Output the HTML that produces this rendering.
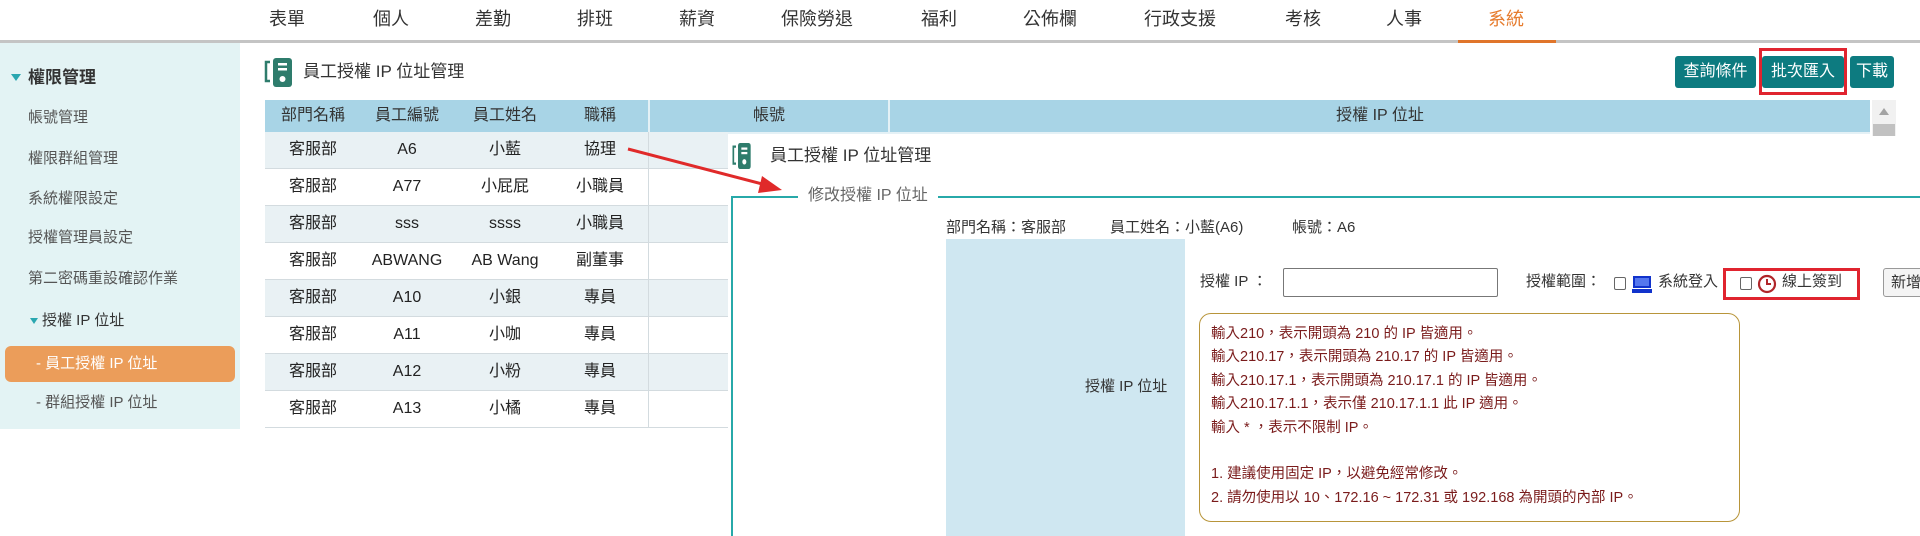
<!DOCTYPE html>
<html><head><meta charset="utf-8">
<style>
*{margin:0;padding:0;box-sizing:border-box}
body{width:1920px;height:536px;overflow:hidden;background:#fff;font-family:"Liberation Sans","Noto Sans CJK TC",sans-serif;color:#333;position:relative;line-height:1.3}
.a{position:absolute;white-space:nowrap}
.nav{font-size:18px;top:8px;color:#333}
.sb{font-size:15px;color:#555;left:28px}
.row{position:absolute;left:265px;width:463px;height:37px;border-bottom:1px solid #d3dbdf;font-size:16px;color:#222}
.row.s{background:#e9f1f4}
.row span{position:absolute;top:0;height:36px;line-height:36px;text-align:center;white-space:nowrap}
.c1{left:8px;width:80px}.c2{left:102px;width:80px}.c3{left:200px;width:80px}.c4{left:295px;width:80px}
.row i{position:absolute;left:383px;top:0;bottom:0;border-left:1px solid #d3dbdf}
.btn{position:absolute;top:56px;height:32px;background:#0d7b80;color:#fff;font-size:16px;border-radius:3px;text-align:center;line-height:32px}
.help{font-size:14.5px;color:#7a1b1b;left:1211px}
.hd{position:absolute;top:100px;height:32px;line-height:32px;font-size:16px;color:#333;text-align:center;white-space:nowrap}
</style></head><body>
<div class="a nav" style="left:269px">表單</div>
<div class="a nav" style="left:373px">個人</div>
<div class="a nav" style="left:475px">差勤</div>
<div class="a nav" style="left:577px">排班</div>
<div class="a nav" style="left:679px">薪資</div>
<div class="a nav" style="left:781px">保險勞退</div>
<div class="a nav" style="left:921px">福利</div>
<div class="a nav" style="left:1023px">公佈欄</div>
<div class="a nav" style="left:1144px">行政支援</div>
<div class="a nav" style="left:1285px">考核</div>
<div class="a nav" style="left:1386px">人事</div>
<div class="a nav" style="left:1488px;color:#e67c2e">系統</div>
<div class="a" style="left:0;top:40px;width:1920px;height:3px;background:#c4c4c4"></div>
<div class="a" style="left:1458px;top:40px;width:98px;height:3px;background:#e0752a"></div>

<div class="a" style="left:0;top:43px;width:240px;height:386px;background:#e3f3f4"></div>
<div class="a" style="left:11px;top:74px;width:0;height:0;border-left:5px solid transparent;border-right:5px solid transparent;border-top:7px solid #2aa7b0"></div>
<div class="a" style="left:28px;top:67px;font-size:17px;font-weight:bold;color:#333">權限管理</div>
<div class="a sb" style="top:108px">帳號管理</div>
<div class="a sb" style="top:149px">權限群組管理</div>
<div class="a sb" style="top:189px">系統權限設定</div>
<div class="a sb" style="top:228px">授權管理員設定</div>
<div class="a sb" style="top:269px">第二密碼重設確認作業</div>
<div class="a" style="left:30px;top:318px;width:0;height:0;border-left:4px solid transparent;border-right:4px solid transparent;border-top:6px solid #2aa7b0"></div>
<div class="a" style="left:42px;top:311px;font-size:15px;color:#333">授權 IP 位址</div>
<div class="a" style="left:5px;top:346px;width:230px;height:36px;background:#eb9d5a;border-radius:6px"></div>
<div class="a" style="left:36px;top:354px;font-size:15px;color:#fff">- 員工授權 IP 位址</div>
<div class="a sb" style="left:36px;top:393px">- 群組授權 IP 位址</div>

<svg class="a" style="left:264px;top:58px" width="30" height="29" viewBox="0 0 30 29"><path d="M6 4H2V23H6" fill="none" stroke="#2e7c6c" stroke-width="2.5"/><rect x="9" y="0" width="19" height="29" rx="3" fill="#2e7c6c"/><rect x="14" y="5" width="9" height="2.5" fill="#fff"/><rect x="14" y="10" width="9" height="2.5" fill="#fff"/><circle cx="18.5" cy="21" r="3" fill="#fff"/></svg>
<div class="a" style="left:303px;top:61px;font-size:17px;color:#333">員工授權 IP 位址管理</div>

<div class="btn" style="left:1675px;width:81px">查詢條件</div>
<div class="btn" style="left:1762px;width:82px">批次匯入</div>
<div class="btn" style="left:1850px;width:44px">下載</div>
<div class="a" style="left:1759px;top:48px;width:88px;height:47px;border:3px solid #e0242f"></div>

<div class="a" style="left:265px;top:100px;width:1605px;height:32px;background:#a8d4e6"></div>
<div class="a" style="left:265px;top:132px;width:1605px;height:2px;background:#e4f1f6"></div>
<div class="a" style="left:648px;top:100px;height:32px;border-left:2px solid #e4f1f6"></div>
<div class="a" style="left:888px;top:100px;height:32px;border-left:2px solid #e4f1f6"></div>
<div class="hd" style="left:273px;width:80px">部門名稱</div>
<div class="hd" style="left:367px;width:80px">員工編號</div>
<div class="hd" style="left:465px;width:80px">員工姓名</div>
<div class="hd" style="left:560px;width:80px">職稱</div>
<div class="hd" style="left:650px;width:238px">帳號</div>
<div class="hd" style="left:890px;width:980px">授權 IP 位址</div>
<div class="a" style="left:1872px;top:100px;width:24px;height:36px;background:#f1f1f1"></div>
<div class="a" style="left:1879px;top:108px;width:0;height:0;border-left:5px solid transparent;border-right:5px solid transparent;border-bottom:7px solid #a3a3a3"></div>
<div class="a" style="left:1873px;top:124px;width:22px;height:12px;background:#c1c1c1"></div>

<div class="row s" style="top:132px"><span class="c1">客服部</span><span class="c2">A6</span><span class="c3">小藍</span><span class="c4">協理</span><i></i></div>
<div class="row" style="top:169px"><span class="c1">客服部</span><span class="c2">A77</span><span class="c3">小屁屁</span><span class="c4">小職員</span><i></i></div>
<div class="row s" style="top:206px"><span class="c1">客服部</span><span class="c2">sss</span><span class="c3">ssss</span><span class="c4">小職員</span><i></i></div>
<div class="row" style="top:243px"><span class="c1">客服部</span><span class="c2">ABWANG</span><span class="c3">AB Wang</span><span class="c4">副董事</span><i></i></div>
<div class="row s" style="top:280px"><span class="c1">客服部</span><span class="c2">A10</span><span class="c3">小銀</span><span class="c4">專員</span><i></i></div>
<div class="row" style="top:317px"><span class="c1">客服部</span><span class="c2">A11</span><span class="c3">小咖</span><span class="c4">專員</span><i></i></div>
<div class="row s" style="top:354px"><span class="c1">客服部</span><span class="c2">A12</span><span class="c3">小粉</span><span class="c4">專員</span><i></i></div>
<div class="row" style="top:391px"><span class="c1">客服部</span><span class="c2">A13</span><span class="c3">小橘</span><span class="c4">專員</span><i></i></div>

<div class="a" style="left:728px;top:134px;width:1142px;height:402px;background:#fff"></div>
<svg class="a" style="left:732px;top:143px" width="20" height="26" viewBox="0 0 30 29" preserveAspectRatio="none"><path d="M6 4H2V23H6" fill="none" stroke="#2e7c6c" stroke-width="2.5"/><rect x="9" y="0" width="19" height="29" rx="3" fill="#2e7c6c"/><rect x="14" y="5" width="9" height="2.5" fill="#fff"/><rect x="14" y="10" width="9" height="2.5" fill="#fff"/><circle cx="18.5" cy="21" r="3" fill="#fff"/></svg>
<div class="a" style="left:770px;top:145px;font-size:17px;color:#333">員工授權 IP 位址管理</div>
<svg class="a" style="left:0;top:0" width="1920" height="536"><line x1="628" y1="149" x2="770" y2="186" stroke="#e02a2a" stroke-width="3"/><polygon points="782,190 762,176 758,193" fill="#e02a2a"/></svg>
<div class="a" style="left:731px;top:196px;width:1189px;height:340px;border-left:2px solid #27a9a9;border-top:2px solid #27a9a9"></div>
<div class="a" style="left:798px;top:186px;background:#fff;padding:0 10px;font-size:16px;color:#666">修改授權 IP 位址</div>
<div class="a" style="left:946px;top:218px;font-size:15px;color:#333">部門名稱：客服部</div>
<div class="a" style="left:1110px;top:218px;font-size:15px;color:#333">員工姓名：小藍(A6)</div>
<div class="a" style="left:1292px;top:218px;font-size:15px;color:#333">帳號：A6</div>
<div class="a" style="left:946px;top:239px;width:239px;height:297px;background:#cfe7f1"></div>
<div class="a" style="left:1085px;top:377px;font-size:15px;color:#333">授權 IP 位址</div>
<div class="a" style="left:1200px;top:272px;font-size:15px;color:#333">授權 IP ：</div>
<div class="a" style="left:1283px;top:268px;width:215px;height:29px;border:1px solid #777;border-radius:2px"></div>
<div class="a" style="left:1526px;top:272px;font-size:15px;color:#333">授權範圍：</div>
<div class="a" style="left:1614px;top:277px;width:12px;height:13px;border:1px solid #666;border-radius:2px"></div>
<svg class="a" style="left:1632px;top:276px" width="20" height="18" viewBox="0 0 20 18"><rect x="1" y="0" width="18" height="12" fill="#1133cc"/><rect x="3" y="2" width="14" height="8" fill="#5577ee"/><rect x="0" y="13" width="20" height="4" fill="#1133cc"/></svg>
<div class="a" style="left:1658px;top:272px;font-size:15px;color:#333">系統登入</div>
<div class="a" style="left:1740px;top:277px;width:12px;height:13px;border:1px solid #666;border-radius:2px"></div>
<svg class="a" style="left:1757px;top:274px" width="20" height="20" viewBox="0 0 20 20"><circle cx="10" cy="10" r="8" fill="none" stroke="#b0262a" stroke-width="2.2"/><path d="M10 5V10H14" fill="none" stroke="#b0262a" stroke-width="2"/></svg>
<div class="a" style="left:1782px;top:272px;font-size:15px;color:#333">線上簽到</div>
<div class="a" style="left:1723px;top:268px;width:137px;height:32px;border:3px solid #e0242f"></div>
<div class="a" style="left:1883px;top:268px;width:50px;height:29px;border:1px solid #999;background:#f4f4f4;border-radius:3px;font-size:15px;padding:4px 0 0 7px">新增</div>
<div class="a" style="left:1199px;top:313px;width:541px;height:209px;border:1px solid #b8953a;border-radius:12px"></div>
<div class="a help" style="top:325px">輸入210，表示開頭為 210 的 IP 皆適用。</div>
<div class="a help" style="top:348px">輸入210.17，表示開頭為 210.17 的 IP 皆適用。</div>
<div class="a help" style="top:372px">輸入210.17.1，表示開頭為 210.17.1 的 IP 皆適用。</div>
<div class="a help" style="top:395px">輸入210.17.1.1，表示僅 210.17.1.1 此 IP 適用。</div>
<div class="a help" style="top:419px">輸入 * ，表示不限制 IP。</div>
<div class="a help" style="top:465px">1. 建議使用固定 IP，以避免經常修改。</div>
<div class="a help" style="top:489px">2. 請勿使用以 10、172.16 ~ 172.31 或 192.168 為開頭的內部 IP。</div>
</body></html>
